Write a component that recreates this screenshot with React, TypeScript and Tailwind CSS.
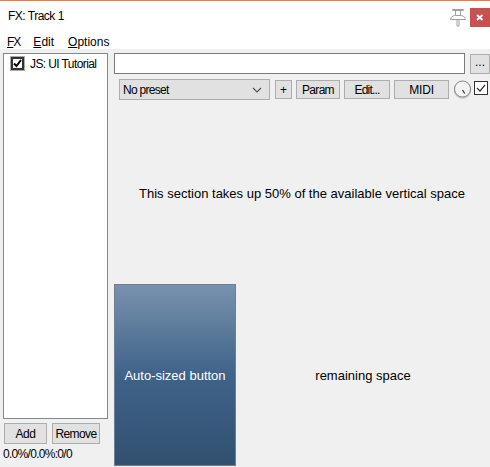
export default function App() {
  const btn = "border border-[#adadad] bg-[#e1e1e1] flex items-center justify-center text-[12px] leading-none text-black";
  return (
    <div className="w-[490px] h-[467px] overflow-hidden flex flex-col bg-[#f0f0f0] text-black text-[12px]" style={{ fontFamily: '"Liberation Sans", Arial, sans-serif' }}>
      <div className="h-px bg-[#ee7b40]" />
      <div className="h-[48px] bg-white flex flex-col">
        <div className="h-[27px] flex items-start">
          <span className="ml-[8px] mt-[7px] text-[12px] leading-[16px] tracking-[-0.5px]">FX: Track 1</span>
          <svg className="ml-auto mt-[7px]" width="16" height="19" viewBox="0 0 16 19" fill="none" stroke="#a0a0a0" strokeWidth="1">
            <path d="M2.5 1.5h11M2.5 1.5v1h11v-1M5.5 2.5v5M10.5 2.5v5M0.5 11.5c0-2 2-4 5-4h5c3 0 5 2 5 4zM7 11.5v6.5h2v-6.5" />
          </svg>
          <div className="ml-[4px] mt-[7px] w-[20px] h-[19px] bg-[#c75050] flex items-center justify-center">
            <svg width="8" height="7" viewBox="0 0 8 7"><path d="M1 1l5.5 5M6.5 1L1 6" stroke="#fff" strokeWidth="1.8" /></svg>
          </div>
        </div>
        <div className="flex pl-[7px] mt-[7px] text-[12px] leading-[14px]">
          <span className="tracking-[-1px]"><span className="underline">F</span>X</span>
          <span className="ml-[13px]"><span className="underline">E</span>dit</span>
          <span className="ml-[14px]"><span className="underline">O</span>ptions</span>
        </div>
      </div>
      <div className="flex-1 flex min-h-0 pt-[4px]">
        <div className="w-[114px] flex flex-col pl-[3px]">
          <div className="w-[105px] h-[366px] bg-white border border-[#828790] flex items-start pl-[7px] pt-[2px]">
            <div className="w-[13px] h-[13px] mt-[1px] shrink-0 bg-white border-2 border-[#333] flex items-center justify-center outline outline-1 outline-[#aaa]">
              <svg width="9" height="9" viewBox="0 0 9 9" fill="none"><path d="M1 4.5l2.5 2.5 4.5-6" stroke="#000" strokeWidth="2" /></svg>
            </div>
            <span className="ml-[6px] leading-[16px] text-[12px] whitespace-nowrap tracking-[-0.6px]">JS: UI Tutorial</span>
          </div>
          <div className="flex mt-[4px] pl-[1px] gap-[5px]">
            <div className={`${btn} w-[43px] h-[21px] tracking-[-0.5px]`}>Add</div>
            <div className={`${btn} w-[48px] h-[21px] tracking-[-0.6px]`}>Remove</div>
          </div>
          <div className="mt-[3px] leading-[14px] text-[12px] tracking-[-0.7px] whitespace-nowrap">0.0%/0.0%:0/0</div>
        </div>
        <div className="flex-1 flex flex-col min-w-0">
          <div className="flex items-start h-[21px]">
            <div className="w-[351px] h-[21px] bg-white border border-[#7a7a7a]" />
            <div className={`${btn} ml-[5px] w-[20px] h-[20px] mt-px pb-[4px]`}>...</div>
          </div>
          <div className="flex items-start h-[26px] mt-[5px] pl-[5px]">
            <div className="w-[151px] h-[21px] bg-[#e1e1e1] border border-[#adadad] flex items-center pl-[3px] pr-[7px]">
              <span className="text-[12px] tracking-[-0.7px]">No preset</span>
              <svg className="ml-auto" width="10" height="6" viewBox="0 0 10 6" fill="none"><path d="M1 1l4 4 4-4" stroke="#555" strokeWidth="1.2" /></svg>
            </div>
            <div className={`${btn} ml-[5px] w-[17px] h-[19px] mt-px`}>+</div>
            <div className={`${btn} ml-[4px] w-[44px] h-[19px] mt-px tracking-[-0.7px]`}>Param</div>
            <div className={`${btn} ml-[4px] w-[46px] h-[19px] mt-px tracking-[-0.8px]`}>Edit...</div>
            <div className={`${btn} ml-[4px] w-[55px] h-[19px] mt-px tracking-[-0.2px]`}>MIDI</div>
            <svg className="ml-[5px] mt-[1px]" width="18" height="20" viewBox="0 0 18 20" fill="none">
              <circle cx="8.5" cy="10" r="8" fill="#f0f0f0" stroke="#c8c8c8" strokeWidth="1.5" />
              <circle cx="8.5" cy="9" r="8" fill="#f4f4f4" stroke="#6a6a6a" strokeWidth="0.8" />
              <path d="M8.5 10l2.2 3.5" stroke="#333" strokeWidth="1.2" />
            </svg>
            <div className="ml-[2px] mt-[2px] w-[14px] h-[14px] bg-white border border-[#333] flex items-center justify-center">
              <svg width="10" height="9" viewBox="0 0 10 9" fill="none"><path d="M1 4l3 3 5-6" stroke="#333" strokeWidth="1.2" /></svg>
            </div>
          </div>
          <div className="h-[179px] flex items-center justify-center text-[13px]">
            <span className="mb-[1px]">This section takes up 50% of the available vertical space</span>
          </div>
          <div className="flex-1 flex min-h-0">
            <div className="w-[122px] h-[182px] border border-[#6f7f90] flex items-center justify-center text-white text-[13px] bg-gradient-to-b from-[#7892ad] via-[#3f6389] to-[#31506f]">
              <span className="mt-[2px]">Auto-sized button</span>
            </div>
            <div className="flex-1 flex items-center justify-center text-[13px] h-[182px]">
              <span className="mt-[2px]">remaining space</span>
            </div>
          </div>
        </div>
      </div>
    </div>
  );
}
